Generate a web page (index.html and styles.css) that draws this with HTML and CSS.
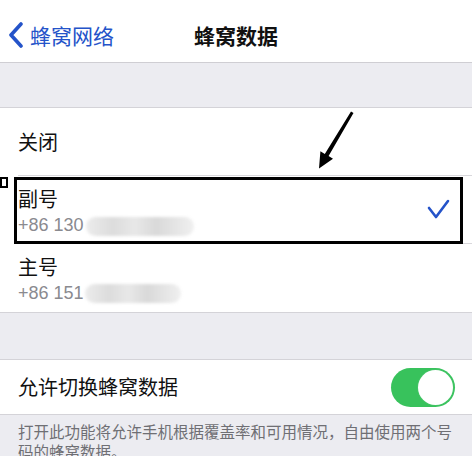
FILE: index.html
```html
<!DOCTYPE html>
<html lang="zh">
<head>
<meta charset="utf-8">
<link rel="stylesheet" href="styles.css">
</head>
<body>
<div class="page">
  <header class="nav">
    <div class="back">
      <svg class="chev" width="18" height="26" viewBox="0 0 18 26"><polyline points="14,2 4,13 14,24" fill="none" stroke="#2453c9" stroke-width="3.6" stroke-linecap="round" stroke-linejoin="round"/></svg>
      <span>蜂窝网络</span>
    </div>
    <div class="title">蜂窝数据</div>
    <div></div>
  </header>

  <div class="spacer"></div>

  <section class="list">
    <div class="row single"><div class="inner"><span class="name">关闭</span></div></div>
    <div class="row double selected">
      <div class="inner">
        <div class="texts">
          <span class="name">副号</span>
          <span class="num">+86 130<span class="blur b1"></span></span>
        </div>
        <svg class="check" width="24" height="22" viewBox="0 0 24 22"><polyline points="2,9 9,18 21,2" fill="none" stroke="#2453c9" stroke-width="2.6" stroke-linecap="round" stroke-linejoin="round"/></svg>
      </div>
      <div class="mark"></div>
      <div class="tag"></div>
    </div>
    <div class="row double last">
      <div class="inner">
        <div class="texts">
          <span class="name">主号</span>
          <span class="num">+86 151<span class="blur b2"></span></span>
        </div>
      </div>
    </div>
  </section>

  <div class="spacer2"></div>

  <section class="list">
    <div class="row toggle-row">
      <div class="inner">
        <span class="name">允许切换蜂窝数据</span>
        <div class="toggle"><div class="knob"></div></div>
      </div>
    </div>
  </section>

  <p class="footer">打开此功能将允许手机根据覆盖率和可用情况，自由使用两个号码的蜂窝数据。</p>

  <svg class="arrow" width="472" height="456" viewBox="0 0 472 456">
    <polygon points="351,111.5 353.5,113 328.6,156 333,158.8 319,168.5 320.4,151.3 324.8,154" fill="#000"/>
  </svg>
</div>
</body>
</html>
```

FILE: styles.css
```css
* { box-sizing: border-box; }
html, body { margin: 0; padding: 0; }
body {
  width: 472px;
  height: 456px;
  overflow: hidden;
  background: #ececf1;
  font-family: "Liberation Sans", "Noto Sans CJK SC", sans-serif;
}
.page { position: relative; width: 472px; height: 456px; }

.nav {
  height: 63px;
  background: #fff;
  border-bottom: 1px solid #cfced3;
  display: grid;
  grid-template-columns: 1fr auto 1fr;
  align-items: center;
  padding-top: 7px;
}
.back {
  display: flex;
  align-items: center;
  color: #2453c9;
  font-size: 21px;
  padding-left: 7px;
  gap: 5px;
  font-family: "Noto Sans CJK SC", sans-serif;
}
.title {
  font-size: 21px;
  font-weight: 600;
  color: #111;
  font-family: "Noto Sans CJK SC", sans-serif;
}

.spacer { height: 44px; }
.spacer2 { height: 46px; }

.list {
  background: #fff;
  border-top: 1px solid #d4d3d8;
  border-bottom: 1px solid #d4d3d8;
}
.row { position: relative; padding-left: 18px; }
.row .inner {
  height: 68px;
  border-bottom: 1px solid #d9d8dc;
  display: flex;
  align-items: center;
  padding-right: 18px;
}
.row.last .inner { border-bottom: none; height: 68px; }
.name {
  font-family: "Noto Sans CJK SC", sans-serif;
  font-size: 20px;
  line-height: 24px;
  color: #111;
}
.double .inner { align-items: flex-start; padding-top: 11px; justify-content: space-between; }
.texts { display: flex; flex-direction: column; gap: 3px; }
.num {
  display: flex;
  align-items: center;
  font-size: 18px;
  line-height: 22px;
  color: #8a8a8f;
}
.blur {
  display: inline-block;
  height: 19px;
  border-radius: 10px;
  background: linear-gradient(90deg, #ececec 0%, #dcdcdc 25%, #e8e8e8 45%, #d9d9d9 65%, #e6e6e6 85%, #f0f0f0 100%);
  filter: blur(1.5px);
}
.b1 { width: 108px; margin-left: 2px; margin-top: 2px; }
.b2 { width: 96px; margin-left: 1px; }

.check { margin-top: 12px; margin-right: 3px; }

.mark {
  position: absolute;
  left: -4px;
  top: 1px;
  width: 449px;
  height: 67px;
  border: 3px solid #000;
  margin-left: 0;
  left: 14px;
}
.tag {
  position: absolute;
  left: 0;
  top: 1px;
  width: 8px;
  height: 11px;
  border: 2px solid #000;
  background: #fff;
}

.toggle-row .inner { height: 54px; border-bottom: none; justify-content: space-between; padding-right: 17px; }
.toggle {
  width: 64px;
  height: 39px;
  border-radius: 20px;
  background: #38c25c;
  position: relative;
}
.knob {
  position: absolute;
  right: 2px;
  top: 2px;
  width: 35px;
  height: 35px;
  border-radius: 50%;
  background: #fff;
  box-shadow: 0 0 0 1px #42c465;
}

.footer {
  margin: 0;
  padding: 7px 14px 0 18px;
  font-family: "Noto Sans CJK SC", sans-serif;
  font-size: 15.5px;
  line-height: 19.5px;
  color: #6f6f74;
}

.arrow { position: absolute; left: 0; top: 0; pointer-events: none; }
```
